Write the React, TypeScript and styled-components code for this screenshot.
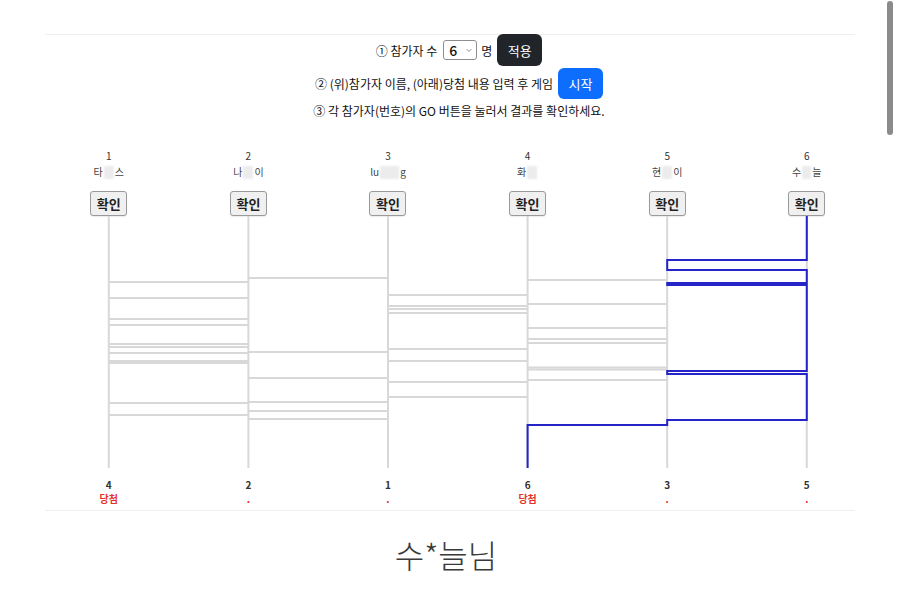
import React, { useMemo, useState } from 'react';
import styled, { createGlobalStyle } from 'styled-components';
import { ChevronDown } from 'lucide-react';

const GlobalStyle = createGlobalStyle`
  html, body {
    margin: 0;
    padding: 0;
    background: #fff;
    overflow: hidden;
  }
  body {
    font-family: "Noto Sans CJK KR", "Noto Sans", sans-serif;
    color: #212529;
  }
`

const COL_W = 139.6
const LADDER_H = 252
const TOP = 215

// [left column, y on screen]
const RUNGS: [number, number][] = [
  [0, 281], [0, 297], [0, 318], [0, 324], [0, 343], [0, 346], [0, 352], [0, 360], [0, 362], [0, 402], [0, 414],
  [1, 277], [1, 351], [1, 377], [1, 401], [1, 410], [1, 418],
  [2, 294], [2, 305], [2, 308], [2, 312], [2, 348], [2, 360], [2, 381], [2, 396],
  [3, 279], [3, 303], [3, 327], [3, 338], [3, 342], [3, 366.5], [3, 368.5], [3, 379], [3, 424],
  [4, 259], [4, 269], [4, 282], [4, 284], [4, 370], [4, 373], [4, 419],
]

const players = [
  { no: 1, pre: '타', hidden: 10, post: '스' },
  { no: 2, pre: '나', hidden: 10, post: '이' },
  { no: 3, pre: 'lu', hidden: 19, post: 'g' },
  { no: 4, pre: '화', hidden: 10, post: '' },
  { no: 5, pre: '현', hidden: 10, post: '이' },
  { no: 6, pre: '수', hidden: 9, post: '늘' },
]

const results = [
  { no: 4, win: true },
  { no: 2, win: false },
  { no: 1, win: false },
  { no: 6, win: true },
  { no: 3, win: false },
  { no: 5, win: false },
]

const colX = (i: number) => COL_W / 2 + i * COL_W

const trace = (start: number) => {
  let col = start
  let y = 0
  const pts: [number, number][] = [[colX(col), 0]]
  for (;;) {
    const next = RUNGS
      .map(([c, ry]) => [c, ry - TOP] as [number, number])
      .filter(([c, ry]) => ry > y && (c === col || c === col - 1))
      .sort((a, b) => a[1] - b[1])[0]
    if (!next) {
      pts.push([colX(col), LADDER_H])
      break
    }
    const [c, ry] = next
    pts.push([colX(col), ry])
    col = c === col ? col + 1 : col - 1
    pts.push([colX(col), ry])
    y = ry
  }
  return pts
}

const Page = styled.div`
  width: 900px;
  height: 612px;
  padding-top: 34px;
  box-sizing: border-box;
`

const Rule = styled.div`
  width: 810px;
  margin: 0 auto;
  border-top: 1px solid #efefef;
`

const Controls = styled.div`
  display: flex;
  flex-direction: column;
  align-items: center;
  gap: 2px;
  padding-left: 18px;
  margin-top: -1px;
`

const Row = styled.div<{ $h: number }>`
  display: flex;
  align-items: center;
  gap: 5px;
  height: ${p => p.$h}px;
  font-size: 12px;
  color: #111;
  white-space: nowrap;
`

const Picker = styled.label`
  display: flex;
  align-items: center;
  width: 34px;
  height: 20px;
  box-sizing: border-box;
  border: 1px solid #8d8d8d;
  border-radius: 3px;
  padding: 0 3px 0 5px;
  margin: 0 -1px 0 1px;
  color: #444;
  select {
    appearance: none;
    border: none;
    outline: none;
    background: transparent;
    font-family: inherit;
    font-size: 14px;
    font-weight: 500;
    color: #111;
    padding: 0;
    width: 16px;
  }
`

const Btn = styled.button<{ $tone: 'dark' | 'blue' }>`
  height: ${p => (p.$tone === 'dark' ? 32 : 31)}px;
  padding: 0 10.5px;
  border: none;
  border-radius: 6px;
  font-family: inherit;
  font-size: 13px;
  color: #fff;
  background: ${p => (p.$tone === 'dark' ? '#212529' : '#0d6efd')};
  cursor: pointer;
`

const Ladder = styled.div`
  width: ${COL_W * 6}px;
  margin: 29px 0 0 39px;
`

const Cols = styled.div`
  display: grid;
  grid-template-columns: repeat(6, ${COL_W}px);
`

const Head = styled.div`
  display: flex;
  flex-direction: column;
  align-items: center;
  font-size: 10px;
  line-height: 16px;
`

const Num = styled.div<{ $bold?: boolean }>`
  color: #333;
  font-weight: ${p => (p.$bold ? 700 : 400)};
  line-height: ${p => (p.$bold ? 14 : 16)}px;
`

const Name = styled.div`
  display: flex;
  align-items: center;
  color: #444;
`

const Hidden = styled.span<{ $w: number }>`
  display: inline-block;
  width: ${p => p.$w}px;
  height: 13px;
  margin: 0 1px;
  background: #ececec;
  filter: blur(1px);
`

const CheckBtn = styled.button`
  margin-top: 11px;
  width: 37px;
  height: 25px;
  padding: 0;
  border: 1px solid #9a9a9a;
  border-radius: 3px;
  background: #f0f0f0;
  font-family: inherit;
  font-size: 13px;
  font-weight: 600;
  color: #222;
  box-shadow: 0 1px 1px rgba(0, 0, 0, 0.08);
`

const Board = styled.svg`
  display: block;
`

const Result = styled.div`
  display: flex;
  flex-direction: column;
  align-items: center;
  font-size: 10px;
  margin-top: 10px;
  margin-bottom: 4px;
`

const Prize = styled.div`
  color: #e5322d;
  font-weight: 700;
  line-height: 14px;
`

const Winner = styled.div`
  margin-top: 21px;
  padding-right: 8px;
  text-align: center;
  font-size: 32px;
  line-height: 44px;
  font-weight: 300;
  color: #3a3a3a;
`

const ScrollThumb = styled.div`
  position: fixed;
  top: 1px;
  right: 7px;
  width: 6px;
  height: 134px;
  border-radius: 3px;
  background: #8a8a8a;
`

export default function App() {
  const [count, setCount] = useState('6')
  const path = useMemo(() => trace(5), [])

  return (
    <Page>
      <GlobalStyle />
      <Rule />
      <Controls>
        <Row $h={32}>
          <span>① 참가자 수</span>
          <Picker>
            <select value={count} onChange={e => setCount(e.target.value)}>
              {[2, 3, 4, 5, 6, 7, 8, 9, 10].map(n => <option key={n} value={n}>{n}</option>)}
            </select>
            <ChevronDown size={11} strokeWidth={1.8} />
          </Picker>
          <span>명</span>
          <Btn $tone="dark">적용</Btn>
        </Row>
        <Row $h={31}>
          <span>② (위)참가자 이름, (아래)당첨 내용 입력 후 게임</span>
          <Btn $tone="blue">시작</Btn>
        </Row>
        <Row $h={18}>
          <span>③ 각 참가자(번호)의 GO 버튼을 눌러서 결과를 확인하세요.</span>
        </Row>
      </Controls>

      <Ladder>
        <Cols>
          {players.map(p => (
            <Head key={p.no}>
              <Num>{p.no}</Num>
              <Name>
                {p.pre}
                <Hidden $w={p.hidden} />
                {p.post}
              </Name>
              <CheckBtn>확인</CheckBtn>
            </Head>
          ))}
        </Cols>
        <Board width={COL_W * 6} height={LADDER_H} viewBox={`0 0 ${COL_W * 6} ${LADDER_H}`}>
          <g stroke="#d8d8d8" strokeWidth={2} fill="none">
            {players.map((_, i) => (
              <line key={i} x1={colX(i)} y1={0} x2={colX(i)} y2={LADDER_H} />
            ))}
            {RUNGS.map(([c, y], i) => (
              <line key={i} x1={colX(c)} y1={y - TOP} x2={colX(c + 1)} y2={y - TOP} />
            ))}
          </g>
          <polyline
            points={path.map(([x, y]) => `${x},${y}`).join(' ')}
            stroke="#2424c8"
            strokeWidth={2}
            fill="none"
          />
        </Board>
        <Cols>
          {results.map((r, i) => (
            <Result key={i}>
              <Num $bold>{r.no}</Num>
              <Prize>{r.win ? '당첨' : '.'}</Prize>
            </Result>
          ))}
        </Cols>
      </Ladder>
      <Rule />
      <Winner>수*늘님</Winner>
      <ScrollThumb />
    </Page>
  )
}
